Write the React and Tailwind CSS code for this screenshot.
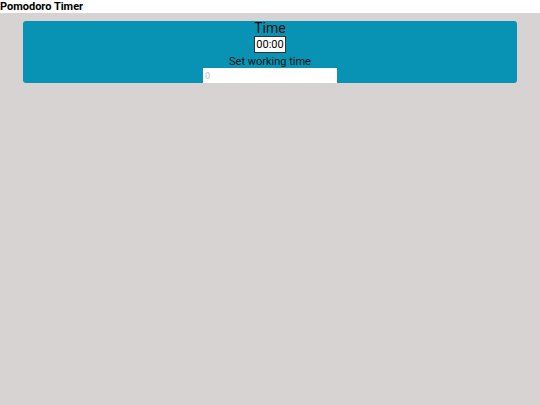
export default function App() {
  return (
    <div className="min-h-screen bg-[#d7d3d2] font-['Roboto',Arial,sans-serif] text-black">
      <header className="h-[13px] bg-white">
        <h1 className="text-[11px] font-bold leading-[13px]">Pomodoro Timer</h1>
      </header>
      <main className="px-[23px] pt-[8px]">
        <div className="flex flex-col items-center rounded-[3px] bg-[#0893b5]">
          <h2 className="text-[14px] leading-[15px] text-[#111]">Time</h2>
          <div className="flex h-[17px] w-[32px] items-center justify-center border border-[#333] bg-white text-[11px] leading-none">
            00:00
          </div>
          <label className="mt-[2px] text-[11px] leading-[13px] text-[#111]">Set working time</label>
          <input
            type="number"
            placeholder="0"
            className="h-[15px] w-[134px] bg-white px-[2px] text-[9px] leading-none outline-none placeholder:text-[#bbb]"
          />
        </div>
      </main>
    </div>
  );
}
